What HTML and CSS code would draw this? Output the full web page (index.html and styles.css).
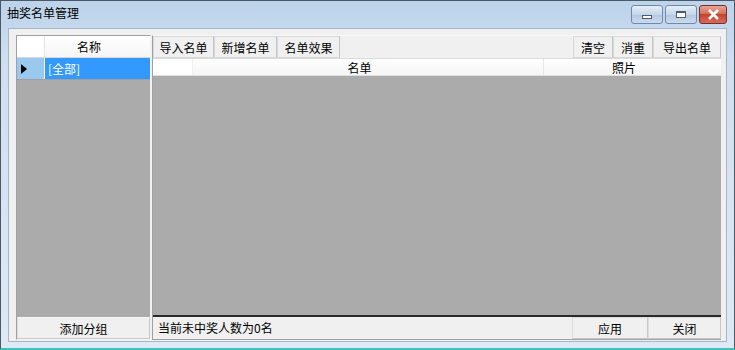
FILE: index.html
```html
<!DOCTYPE html>
<html lang="zh">
<head>
    <meta charset="UTF-8">
    <title>抽奖名单管理</title>
    <link rel="stylesheet" href="styles.css">
</head>
<body>
    <div class="window">
        <div class="titlebar">
            <span class="title">抽奖名单管理</span>
            <div class="caption-buttons">
                <div class="cap-btn cap-min"><span class="min-glyph"></span></div>
                <div class="cap-btn cap-max"><span class="max-glyph"></span></div>
                <div class="cap-btn cap-close">
                    <svg width="13" height="11" viewBox="0 0 13 11">
                        <path d="M2 1 L11 10 M11 1 L2 10" stroke="#fff" stroke-width="2.6" />
                    </svg>
                </div>
            </div>
        </div>

        <div class="client">
            <!-- group list -->
            <div class="group-panel">
                <div class="grid-head">
                    <div class="row-head"></div>
                    <div class="col-head group-col">名称</div>
                </div>
                <div class="group-row">
                    <div class="row-head selected-head">
                        <svg width="6" height="10" viewBox="0 0 6 10"><path d="M0 0 L6 5 L0 10 Z" fill="#000" /></svg>
                    </div>
                    <div class="group-cell">[全部]</div>
                </div>
                <div class="grid-empty"></div>
                <button class="panel-btn add-btn">添加分组</button>
            </div>

            <!-- names -->
            <div class="list-panel">
                <div class="toolbar">
                    <button class="tool-btn w60">导入名单</button>
                    <button class="tool-btn w62">新增名单</button>
                    <button class="tool-btn w62">名单效果</button>
                    <div class="spacer"></div>
                    <button class="tool-btn w40">清空</button>
                    <button class="tool-btn w40">消重</button>
                    <button class="tool-btn w68">导出名单</button>
                </div>
                <div class="list-head">
                    <div class="row-head list-row-head"></div>
                    <div class="col-head name-col">名单</div>
                    <div class="col-head photo-col">照片</div>
                </div>
                <div class="grid-empty list-empty"></div>
                <div class="statusbar">
                    <div class="status-text">当前未中奖人数为0名</div>
                    <button class="panel-btn w76">应用</button>
                    <button class="panel-btn w73">关闭</button>
                </div>
            </div>
        </div>
    </div>
</body>
</html>
```

FILE: styles.css
```css
* {
    box-sizing: border-box;
}

body {
    margin: 0;
    font-family: "Noto Sans CJK SC", "Liberation Sans", sans-serif;
    font-size: 12px;
    color: #000;
}

.window {
    width: 735px;
    height: 350px;
    display: flex;
    flex-direction: column;
    background: linear-gradient(to bottom, #bcd3ea 0px, #d0def0 60px, #dfe9f5 100%);
    border: 1px solid #4b5866;
    border-bottom: 2px solid #3ec4c0;
}

.titlebar {
    height: 27px;
    display: flex;
    align-items: flex-start;
    justify-content: space-between;
    padding: 0 7px 0 6px;
}

.title {
    margin-top: 4px;
    line-height: 16px;
}

.caption-buttons {
    display: flex;
    gap: 2px;
    margin-top: 4px;
}

.cap-btn {
    height: 19px;
    border: 1px solid #6f8aa8;
    border-radius: 3px;
    display: flex;
    align-items: center;
    justify-content: center;
    background: linear-gradient(to bottom, #e6eef8 0%, #c6d6ea 50%, #b3c7df 51%, #c9dbef 100%);
}

.cap-min,
.cap-max {
    width: 32px;
}

.cap-close {
    width: 28px;
    border-color: #7a2b2b;
    background: linear-gradient(to bottom, #e8a493 0%, #d37160 45%, #c4442f 50%, #d56d57 100%);
}

.min-glyph {
    width: 10px;
    height: 4px;
    margin-top: 5px;
    border: 1px solid #4c5a6a;
    background: #fff;
}

.max-glyph {
    width: 10px;
    height: 7px;
    border: 1px solid #4c5a6a;
    border-top-width: 2px;
    background: #fff;
}

.client {
    flex: 1;
    margin: 0 7px 6px 7px;
    background: #f0f0f0;
    border: 1px solid #a6b6c8;
    padding: 6px 5px 1px 7px;
    display: flex;
    gap: 1px;
}

.group-panel {
    width: 135px;
    display: flex;
    flex-direction: column;
    border: 1px solid #a0a0a0;
    border-right-color: #f4f4f4;
    border-bottom-color: #f4f4f4;
}

.grid-head {
    display: flex;
    height: 22px;
    background: #fff;
    border-bottom: 1px solid #d8d8d8;
}

.row-head {
    width: 28px;
    flex: none;
    background: #fff;
    border-right: 1px solid #e4e4e4;
}

.col-head {
    display: flex;
    align-items: center;
    justify-content: center;
    padding-right: 17px;
    background: linear-gradient(to bottom, #ffffff, #f5f5f5);
}

.group-col {
    flex: 1;
}

.group-row {
    display: flex;
    height: 22px;
    border-bottom: 1px solid #a0a0a0;
}

.selected-head {
    background: #99c9ee;
    display: flex;
    align-items: center;
    padding-left: 4px;
    border-right: 1px solid #fff;
}

.group-cell {
    flex: 1;
    background: #3399ff;
    color: #fff;
    padding-left: 3px;
    line-height: 21px;
}

.grid-empty {
    flex: 1;
    background: #ababab;
}

button {
    font-family: inherit;
    font-size: 12px;
    color: #000;
    background: #f0f0f0;
    border: 1px solid #dcdcdc;
    border-right-color: #c8c8c8;
    border-bottom-color: #c8c8c8;
    padding: 0;
    margin: 0;
    cursor: default;
}

.panel-btn {
    height: 22px;
}

.add-btn {
    border-top: 1px solid #f8f8f8;
}

.list-panel {
    flex: 1;
    display: flex;
    flex-direction: column;
    border-left: 1px solid #a0a0a0;
    border-top: 1px solid #f8f8f8;
}

.toolbar {
    display: flex;
    height: 22px;
    background: #f0f0f0;
}

.tool-btn {
    height: 22px;
    background: #f0f0f0;
    border: 1px solid #d8d8d8;
    border-right-color: #c4c4c4;
}

.spacer {
    flex: 1;
}

.w40 { width: 40px; }
.w60 { width: 61px; }
.w62 { width: 63px; }
.w68 { width: 68px; }
.w73 { width: 73px; }
.w76 { width: 76px; }

.list-head {
    display: flex;
    height: 18px;
    background: #fff;
    border-top: 1px solid #dcdcdc;
    border-bottom: 1px solid #e0e0e0;
}

.list-row-head {
    width: 40px;
    border-right: 1px solid #f0f0f0;
}

.name-col {
    width: 351px;
    border-right: 1px solid #e8e8e8;
}

.photo-col {
    flex: 1;
}

.list-empty {
    border-bottom: 2px solid #2a2a2a;
}

.statusbar {
    display: flex;
    height: 23px;
    background: #f0f0f0;
    border-bottom: 1px solid #a0a0a0;
}

.status-text {
    flex: 1;
    padding-left: 5px;
    line-height: 22px;
}
```
